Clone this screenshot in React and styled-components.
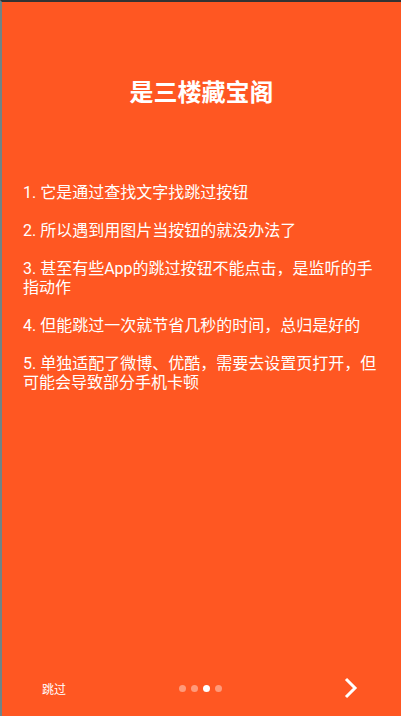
import React from 'react';
import styled, { createGlobalStyle } from 'styled-components';

const GlobalStyle = createGlobalStyle`
  html, body {
    margin: 0;
    padding: 0;
    background: #333;
  }
  * {
    box-sizing: border-box;
  }
`;

const Screen = styled.div`
  width: 401px;
  height: 716px;
  display: flex;
  flex-direction: column;
  background: #ff5722;
  border-top: 2px solid #333;
  border-left: 2px solid #6f8488;
  color: #fff;
  font-family: Roboto, 'Noto Sans CJK SC', sans-serif;
`;

const Title = styled.h1`
  margin: 0;
  padding-top: 73px;
  text-align: center;
  font-size: 24px;
  line-height: 32px;
  font-weight: 700;
  font-family: 'Noto Sans CJK SC', sans-serif;
`;

const Tips = styled.div`
  padding: 76px 21px 0 21px;
  display: flex;
  flex-direction: column;
  gap: 19px;
`;

const Tip = styled.p`
  margin: 0;
  font-size: 16px;
  line-height: 19px;
`;

const Footer = styled.div`
  margin-top: auto;
  height: 56px;
  padding: 0 42px 0 40px;
  display: grid;
  grid-template-columns: 1fr auto 1fr;
  align-items: center;
`;

const Skip = styled.span`
  font-size: 12px;
  justify-self: start;
  font-family: 'Noto Sans CJK SC', sans-serif;
`;

const Dots = styled.div`
  display: flex;
  gap: 5px;
`;

const Dot = styled.span`
  width: 7px;
  height: 7px;
  border-radius: 50%;
  background: ${(p) => (p.$active ? '#fff' : 'rgba(255,255,255,0.4)')};
`;

const Next = styled.span`
  justify-self: end;
  display: flex;
`;

const tips = [
  '1. 它是通过查找文字找跳过按钮',
  '2. 所以遇到用图片当按钮的就没办法了',
  '3. 甚至有些App的跳过按钮不能点击，是监听的手指动作',
  '4. 但能跳过一次就节省几秒的时间，总归是好的',
  '5. 单独适配了微博、优酷，需要去设置页打开，但可能会导致部分手机卡顿',
];

export default function App() {
  return (
    <>
      <GlobalStyle />
      <Screen>
        <Title>是三楼藏宝阁</Title>
        <Tips>
          {tips.map((t) => (
            <Tip key={t}>{t}</Tip>
          ))}
        </Tips>
        <Footer>
          <Skip>跳过</Skip>
          <Dots>
            {[0, 1, 2, 3].map((i) => (
              <Dot key={i} $active={i === 2} />
            ))}
          </Dots>
          <Next>
            <svg width="16" height="22" viewBox="0 0 16 22">
              <path d="M3 2 L12 11 L3 20" fill="none" stroke="#fff" strokeWidth="3" />
            </svg>
          </Next>
        </Footer>
      </Screen>
    </>
  );
}
